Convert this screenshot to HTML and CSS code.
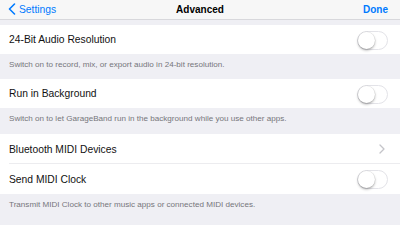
FILE: index.html
```html
<!DOCTYPE html>
<html>
<head>
<meta charset="utf-8">
<link rel="stylesheet" href="styles.css">
</head>
<body>
<div class="nav">
  <div class="nav-left">
    <svg class="back" width="8" height="12" viewBox="0 0 8 12"><path d="M6.5 1 L1.5 6 L6.5 11" fill="none" stroke="#007aff" stroke-width="1.6" stroke-linecap="round" stroke-linejoin="round"/></svg>
    <span>Settings</span>
  </div>
  <div class="nav-title">Advanced</div>
  <div class="nav-right">Done</div>
</div>
<div class="content">
  <div class="group g1">
    <div class="row r29"><span class="label">24-Bit Audio Resolution</span><span class="switch"><span class="knob"></span></span></div>
  </div>
  <div class="footer f1">Switch on to record, mix, or export audio in 24-bit resolution.</div>
  <div class="group">
    <div class="row r29"><span class="label">Run in Background</span><span class="switch"><span class="knob"></span></span></div>
  </div>
  <div class="footer f2">Switch on to let GarageBand run in the background while you use other apps.</div>
  <div class="group">
    <div class="row r30 sep"><span class="label">Bluetooth MIDI Devices</span>
      <svg class="chev" width="6" height="10" viewBox="0 0 6 10"><path d="M1 1 L5 5 L1 9" fill="none" stroke="#c4c4c9" stroke-width="1.3" stroke-linecap="round" stroke-linejoin="round"/></svg>
    </div>
    <div class="row r30"><span class="label">Send MIDI Clock</span><span class="switch"><span class="knob"></span></span></div>
  </div>
  <div class="footer f3">Transmit MIDI Clock to other music apps or connected MIDI devices.</div>
</div>
</body>
</html>
```

FILE: styles.css
```css
* { box-sizing: border-box; }
html, body {
  margin: 0;
  padding: 0;
  width: 400px;
  height: 225px;
  overflow: hidden;
  background: #efeff4;
  font-family: "Liberation Sans", Arial, sans-serif;
}
.nav {
  height: 20px;
  background: #f7f7f7;
  border-bottom: 1px solid #d8d8dc;
  display: flex;
  align-items: center;
  justify-content: space-between;
  padding: 0 12px 1px 8px;
  position: relative;
}
.nav-left {
  display: flex;
  align-items: center;
  gap: 3px;
  color: #007aff;
  font-size: 10.3px;
}
.back { display: block; }
.nav-title {
  position: absolute;
  left: 0;
  right: 0;
  text-align: center;
  font-weight: bold;
  font-size: 10px;
  color: #000;
  pointer-events: none;
}
.nav-right {
  color: #007aff;
  font-weight: bold;
  font-size: 10px;
}
.content { padding-top: 5px; }
.group {
  background: #fff;
}
.row {
  display: flex;
  align-items: center;
  justify-content: space-between;
  padding: 0 12px 0 9px;
  font-size: 10.3px;
  color: #111;
  position: relative;
}
.r29 { height: 29px; }
.r30 { height: 30px; }
.sep::after {
  content: "";
  position: absolute;
  left: 9px;
  right: 0;
  bottom: 0;
  height: 1px;
  background: #ececef;
}
.switch {
  width: 31px;
  height: 19px;
  border-radius: 10px;
  border: 1px solid #e3e3e8;
  background: #fff;
  position: relative;
  margin-top: 1px;
}
.knob {
  position: absolute;
  left: 0;
  top: 0;
  width: 17px;
  height: 17px;
  border-radius: 50%;
  background: #fff;
  box-shadow: 0 1.5px 2.5px rgba(0,0,0,0.3), 0 0 0 0.5px rgba(0,0,0,0.1);
}
.chev { display: block; margin-right: 3px; }
.footer {
  font-size: 8.1px;
  color: #76767b;
  padding: 6px 9px 0;
}
.f1 { height: 25px; }
.f2 { height: 26px; }
.f3 { height: 31px; }
```
